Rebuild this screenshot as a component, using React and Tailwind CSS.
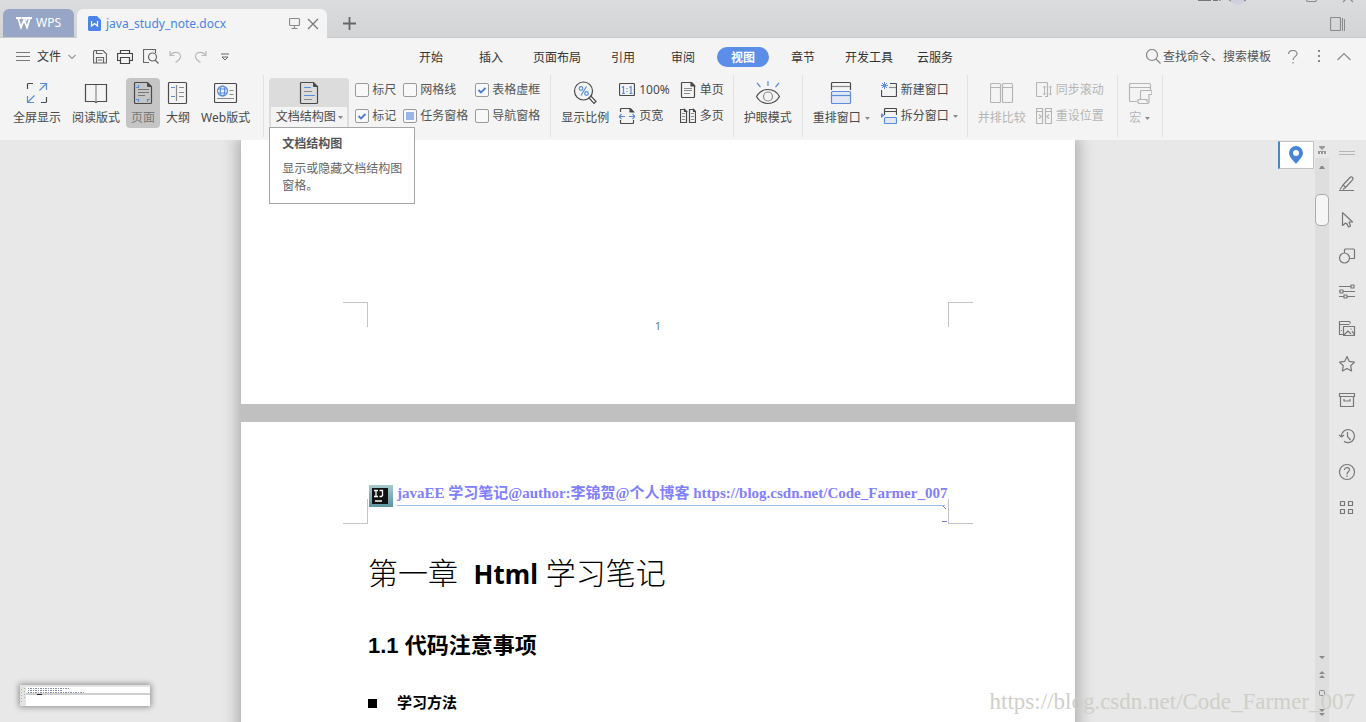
import clsx from "clsx";

const menus = ["开始", "插入", "页面布局", "引用", "审阅", "视图", "章节", "开发工具", "云服务"];

const Svg = ({ w = 24, h = 24, className, children }) => (
  <svg
    width={w}
    height={h}
    viewBox={`0 0 ${w} ${h}`}
    fill="none"
    stroke="currentColor"
    strokeWidth="1.2"
    aria-hidden="true"
    className={clsx("shrink-0", className)}
  >
    {children}
  </svg>
);

const BLUE = "#5b8ddb";

const Caret = () => (
  <svg width="5" height="3" viewBox="0 0 5 3" className="shrink-0" aria-hidden="true">
    <path d="M0 0h5L2.5 3z" fill="#8a8a8a" />
  </svg>
);

// ribbon icons, 24x24
const FullScreenIcon = () => (
  <Svg>
    <path d="M2.5 8V3.5a1 1 0 0 1 1-1H8M21.500 16v4.500a1 1 0 0 1-1 1H16" />
    <path d="M15 2.500h6.500V9M21.500 2.500l-7 7M9 21.500H2.500V15M2.500 21.500l7-7" stroke={BLUE} />
  </Svg>
);

const ReadIcon = () => (
  <Svg>
    <path d="M1.500 3.500h21v17h-9l-1.500 1-1.500-1h-9z" />
    <path d="M12 4v17" stroke="#8a8a8a" />
  </Svg>
);

const PageIcon = () => (
  <Svg>
    <path d="M4.500 1.500h12l4 4v16a1 1 0 0 1-1 1h-15a1 1 0 0 1-1-1v-19a1 1 0 0 1 1-1z" />
    <path d="M16 1l5 5h-4a1 1 0 0 1-1-1z" fill="currentColor" stroke="none" />
    <path d="M7 8.500h11M7 11.500h11M7 14.500h7" stroke="#777" />
    <path d="M5 6.500h2.500V4M5 18.500h2.500V21M19 18.500h-2.500V21" stroke={BLUE} />
  </Svg>
);

const OutlineIcon = () => (
  <Svg>
    <rect x="2.500" y="1.500" width="18" height="21" rx="1" />
    <path d="M10.500 4v16M13 6.500h5M13 11.500h5M13 15.500h5" stroke="#8a8a8a" />
    <path d="M5 6.500h4M5 15.500h4" stroke={BLUE} />
  </Svg>
);

const WebIcon = () => (
  <Svg>
    <rect x=".500" y="2.500" width="22" height="19" rx="1" />
    <path d="M15.500 9.500h4M15.500 13.500h4M3 17.500h17" stroke="#8a8a8a" />
    <g stroke={BLUE}>
      <circle cx="8.500" cy="10" r="5" />
      <ellipse cx="8.500" cy="10" rx="2.200" ry="5" />
      <path d="M4 8h9M4 12h9" />
    </g>
  </Svg>
);

const DocMapIcon = () => (
  <Svg>
    <path d="M4.500 1.500h12l4 4v16a1 1 0 0 1-1 1h-15a1 1 0 0 1-1-1v-19a1 1 0 0 1 1-1z" />
    <path d="M16 1l5 5h-4a1 1 0 0 1-1-1z" fill="currentColor" stroke="none" />
    <path d="M7 6.500h7M7 14.500h11" stroke={BLUE} />
    <path d="M7 10.500h8M7 18.500h8" stroke="#8a8a8a" />
  </Svg>
);

const ZoomIcon = () => (
  <Svg>
    <circle cx="10.500" cy="10" r="9" />
    <path d="M16 17l2-2 5 5.500-2 2z" fill="#fff" />
    <circle cx="8" cy="7.500" r="1.800" stroke={BLUE} />
    <circle cx="13.500" cy="12.500" r="1.800" stroke={BLUE} />
    <path d="M13.500 5.500l-5.500 9" stroke={BLUE} />
  </Svg>
);

const EyeIcon = () => (
  <Svg h={26}>
    <path d="M.500 16.500C3 12 7 9.500 12 9.500s9 2.500 11.500 7c-2.500 4.500-6.500 7-11.500 7S3 21 .500 16.500z" />
    <circle cx="12" cy="16.500" r="4.500" stroke="#8a8a8a" />
    <path d="M12 1v5M1 3l3.500 4M23 3l-3.500 4" stroke={BLUE} />
  </Svg>
);

const ArrangeIcon = () => (
  <Svg>
    <path d="M2.500 9V2.500a1 1 0 0 1 1-1h17a1 1 0 0 1 1 1V9" />
    <path d="M3 5.500h18" stroke="#8a8a8a" />
    <rect x="2.500" y="10.500" width="19" height="12" rx="1" stroke={BLUE} fill="#e3e9f4" />
    <path d="M3 14.500h18" stroke={BLUE} />
  </Svg>
);

const CompareIcon = () => (
  <Svg>
    <rect x=".500" y="2.500" width="10" height="19" rx="1" />
    <rect x="12.500" y="2.500" width="10" height="19" rx="1" />
    <path d="M1 6.500h9M13 6.500h9" />
  </Svg>
);

const MacroIcon = () => (
  <Svg>
    <path d="M9 20.500H2.500a1 1 0 0 1-1-1v-16a1 1 0 0 1 1-1h19a1 1 0 0 1 1 1V10M2 6.500h20" />
    <path d="M12.500 18v-7.500a1 1 0 0 1 1-1H23a1 1 0 0 1 1 1v3h-3v7a2 2 0 0 1-2 2h-8a1.500 1.500 0 0 1-1-1.500V18.500h9V21" />
  </Svg>
);

// ribbon icons, 16x16
const OneToOneIcon = () => (
  <Svg w={16} h={16}>
    <rect x=".500" y="1.500" width="15" height="12" rx="1" />
    <path d="M3 5.500l1.500-1v7M10.500 5.500l1.500-1v7M3 11.500h3M10.500 11.500h3M8 6v1M8 9v1" stroke={BLUE} />
  </Svg>
);

const PageWidthIcon = () => (
  <Svg w={16} h={16}>
    <path d="M1.500 4V1.500a1 1 0 0 1 1-1H11l3.500 3.500M1.500 12v2.500a1 1 0 0 0 1 1h11a1 1 0 0 0 1-1V12" />
    <path d="M11 .500l3.500 3.500H11z" fill="currentColor" />
    <path d="M0 8.500h6M2.500 6L0 8.500 2.500 11M16 8.500h-6M13.500 6L16 8.500 13.500 11" stroke={BLUE} />
  </Svg>
);

const SinglePageIcon = () => (
  <Svg w={16} h={16}>
    <path d="M2.500.500h9l3 3v11a1 1 0 0 1-1 1h-11a1 1 0 0 1-1-1v-13a1 1 0 0 1 1-1z" />
    <path d="M11 .500v3.500h3.500z" fill="currentColor" />
    <path d="M4 6.500h8M4 8.500h8M4 11.500h6" stroke="#8a8a8a" />
  </Svg>
);

const MultiPageIcon = () => (
  <Svg w={16} h={16}>
    <path d="M.500 1.500h4l2 2v11h-6zM9.500 1.500h4l2 2v11h-6z" />
    <path d="M4.500 1.500v2h2zM13.500 1.500v2h2z" fill="currentColor" />
    <path d="M2 5.500h3M2 8.500h3M2 11.500h3M11 5.500h3M11 8.500h3M11 11.500h3" stroke="#8a8a8a" />
  </Svg>
);

const NewWindowIcon = () => (
  <Svg w={16} h={16}>
    <path d="M.500 8v5.500a1 1 0 0 0 1 1h13a1 1 0 0 0 1-1v-11a1 1 0 0 0-1-1H9" />
    <path d="M8 5.500h7" stroke="#8a8a8a" />
    <path d="M3.500 0v7M0 3.500h7M1 1l5 5M6 1L1 6" stroke={BLUE} strokeWidth="1" />
  </Svg>
);

const SplitIcon = () => (
  <Svg w={16} h={16}>
    <path d="M3.500 7V1.500a1 1 0 0 1 1-1h10a1 1 0 0 1 1 1V7M4 3.500h11" />
    <rect x="3.500" y="9.500" width="12" height="6" rx="1" stroke={BLUE} fill="#e3e9f4" />
    <path d="M0 5l3.500 2.500L0 10z" fill={BLUE} stroke="none" />
  </Svg>
);

const SyncScrollIcon = () => (
  <Svg w={16} h={16}>
    <path d="M6 14.500H1.500a1 1 0 0 1-1-1v-12a1 1 0 0 1 1-1h9a1 1 0 0 1 1 1V14.500H9" />
    <path d="M8.500 4v9M14.500 4v9M7 5.500L8.500 4 10 5.500M7 11.500L8.500 13l1.500-1.500M13 5.500L14.500 4 16 5.500M13 11.500l1.500 1.500 1.500-1.500" strokeWidth="1" />
  </Svg>
);

const ResetPosIcon = () => (
  <Svg w={16} h={16}>
    <path d="M.500.500h6v15h-6zM9.500.500h6v15h-6zM1 3.500h5M10 3.500h5M3 6.500l2 2-2 2M13 6.500l-2 2 2 2" />
  </Svg>
);

function Group({ className, children }) {
  return (
    <div className={clsx("flex h-[62px] shrink-0 border-r border-[#e2e2e2] pt-[3px]", className)}>
      {children}
    </div>
  );
}

function BigButton({ icon, label, active, disabled, caret }) {
  return (
    <button
      disabled={disabled}
      className={clsx(
        "flex h-[50px] shrink-0 flex-col items-center rounded px-[5px] pt-[3px]",
        active && "bg-[#c5c5c5]",
        disabled ? "text-[#b5b5b5]" : "text-[#4a4a4a]"
      )}
    >
      <span className="flex h-6 items-center">{icon}</span>
      <span className={clsx("mt-[5px] flex items-center gap-1 leading-4", active && "text-[#777]")}>
        {label}
        {caret && <Caret />}
      </span>
    </button>
  );
}

function SmallButton({ icon, label, disabled, caret }) {
  return (
    <button
      disabled={disabled}
      className={clsx(
        "flex h-4 items-center gap-1 leading-4",
        disabled ? "text-[#b5b5b5]" : "text-[#4a4a4a]"
      )}
    >
      {icon}
      {label}
      {caret && <Caret />}
    </button>
  );
}

function Check({ label, state }) {
  return (
    <label className="relative flex h-4 items-center gap-[3px] leading-4">
      <input
        type="checkbox"
        defaultChecked={state === "on"}
        className="size-[14px] shrink-0 appearance-none rounded-xs border border-[#9a9a9a] bg-[#f8f8f8]"
      />
      {state === "on" && (
        <Svg w={14} h={14} className="pointer-events-none absolute left-0 text-[#4a7dd2]">
          <path d="M3.500 7l2.500 2.500L10.500 5" strokeWidth="1.800" />
        </Svg>
      )}
      {state === "mixed" && (
        <span className="pointer-events-none absolute left-[3px] size-2 bg-[#9ab5e8]" />
      )}
      {label}
    </label>
  );
}

function TitleBar() {
  return (
    <header className="relative flex h-[38px] shrink-0 items-end border-b border-[#cacaca] bg-linear-to-b from-[#dbdcde] to-[#d3d4d6] pl-[3px]">
      <button className="flex h-7 w-[71px] items-center justify-center gap-1 rounded-t-md bg-[#97a6c7] text-[12px] text-white">
        <Svg w={16} h={14}>
          <path d="M0 2h5.500M2 2l3 9.500L8 4l3 7.500L14 2M6 2h5l-1 3M11.500 2H16" strokeWidth="1.800" />
        </Svg>
        WPS
      </button>
      <div className="relative top-px ml-[3px] flex h-[29px] w-[250px] items-center rounded-t-md bg-[#f4f4f4] pr-2 pl-[11px]">
        <svg width="13" height="15" viewBox="0 0 13 15" aria-hidden="true">
          <path d="M1.500 0H9l4 4v9.500a1.500 1.500 0 0 1-1.500 1.500h-10A1.500 1.500 0 0 1 0 13.500v-12A1.500 1.500 0 0 1 1.500 0z" fill="#4b83e6" />
          <path d="M3.500 5v5L6.500 7.500l3 2.500V5" fill="none" stroke="#fff" strokeWidth="1.300" />
        </svg>
        <span className="ml-[5px] text-[12px] text-[#4b83e6]">java_study_note.docx</span>
        <Svg w={12} h={13} className="ml-auto text-[#8a8a8a]">
          <rect x=".500" y="1.500" width="10" height="7" rx="1" />
          <path d="M5.500 9v2.500M2.500 11.500h6" />
        </Svg>
        <button aria-label="关闭" className="ml-1.5 text-[#777]">
          <Svg w={12} h={12}>
            <path d="M1 1l10 10M11 1L1 11" />
          </Svg>
        </button>
      </div>
      <button aria-label="新建" className="mb-[7px] ml-4 text-[#666]">
        <Svg w={13} h={13}>
          <path d="M6.500 0v13M0 6.500h13" strokeWidth="1.800" />
        </Svg>
      </button>
      <button aria-label="侧栏" className="mr-5 mb-1.5 ml-auto text-[#8a8a8a]">
        <Svg w={16} h={14}>
          <rect x=".500" y=".500" width="10" height="13" rx="1" />
          <path d="M12.500 1v13M14.500 2v12" strokeWidth="1" />
        </Svg>
      </button>
      <div className="absolute top-0 right-2">
        <Svg w={160} h={6}>
          <path d="M0 .500h13M15 .500h5M22 0v1" stroke="#777" />
          <circle cx="40" cy="-4" r="9" fill="#d0d1de" stroke="none" />
          <path d="M31 0l2 1M48 0l-2 1" stroke="#8d8da5" />
          <path d="M108.500 0a1.500 1.500 0 0 0 1.500 1.500h7a1.500 1.500 0 0 0 1.500-1.500M145 2l4-4M155 2l-4-4" stroke="#8a8a8a" />
        </Svg>
      </div>
    </header>
  );
}

function MenuBar() {
  return (
    <nav className="flex h-[37px] shrink-0 items-center text-[#333]">
      <div className="flex w-[405px] shrink-0 items-center pl-4 text-[#666]">
        <button className="flex items-center gap-[7px]">
          <Svg w={14} h={11} className="text-[#777]">
            <path d="M0 1.500h14M0 5.500h14M0 9.500h14" strokeWidth="1" />
          </Svg>
          <span className="text-[#333]">文件</span>
          <Svg w={8} h={6} className="text-[#999]">
            <path d="M.500 1L4 4.500 7.500 1" />
          </Svg>
        </button>
        <button aria-label="保存" className="ml-[17px]">
          <Svg w={14} h={14}>
            <path d="M1.500.500H10L13.500 4v9h-13V1.500z" />
            <path d="M3.500.500v3h6M3.500 13V7.500h7V13M5 10h4" />
          </Svg>
        </button>
        <button aria-label="打印" className="ml-2.5 text-[#444]">
          <Svg w={16} h={16}>
            <path d="M3.500 4V1.500h9V4M3.500 11.500h-3v-7h15v7h-3M3.500 8.500h9v6h-9z" />
          </Svg>
        </button>
        <button aria-label="打印预览" className="ml-2.5">
          <Svg w={16} h={16}>
            <path d="M6 13.500H.500v-13h12V4" />
            <circle cx="9.500" cy="8" r="4" />
            <path d="M12 11l3.500 3.500" />
          </Svg>
        </button>
        <button aria-label="撤销" className="ml-2.5 text-[#bbb]">
          <Svg w={13} h={13}>
            <path d="M1 1v4.500h4.500M1 5.500C4 1 11 1.500 11.500 6c.300 3-2 4.500-5 6.500" />
          </Svg>
        </button>
        <button aria-label="恢复" className="ml-3 text-[#bbb]">
          <Svg w={13} h={13}>
            <path d="M12 1v4.500H7.500M12 5.500C9 1 2 1.500 1.500 6c-.300 3 2 4.500 5 6.500" />
          </Svg>
        </button>
        <button aria-label="更多" className="ml-3.5">
          <Svg w={8} h={8}>
            <path d="M0 1h8M1 4l3 3 3-3z" strokeWidth="1" />
          </Svg>
        </button>
      </div>
      <div className="flex shrink-0 items-center gap-2">
        {menus.map((name) => (
          <button
            key={name}
            className={clsx(
              "h-5 min-w-[52px] rounded-full px-2 leading-[22px]",
              name === "视图" && "bg-[#5b8ee8] font-bold text-white"
            )}
          >
            {name}
          </button>
        ))}
      </div>
      <div className="ml-auto flex items-center pr-[15px] text-[#888]">
        <label htmlFor="search" className="mr-0.5">
          <Svg w={15} h={15}>
            <circle cx="6" cy="6" r="5.500" />
            <path d="M10 10l4.500 4.500" />
          </Svg>
        </label>
        <input
          id="search"
          aria-label="搜索"
          placeholder="查找命令、搜索模板"
          className="w-[124px] bg-transparent outline-none placeholder:text-[#555]"
        />
        <button aria-label="帮助">
          <Svg w={12} h={14}>
            <path d="M1.500 4c0-5 9-4.500 8.500 0-.300 2.500-4 3-4 6M6 12v1.500" />
          </Svg>
        </button>
        <button aria-label="选项" className="ml-[19px]">
          <svg width="3" height="13" viewBox="0 0 3 13" fill="currentColor" aria-hidden="true">
            <path d="M0 0h2v2H0zM0 5h2v2H0zM0 10h2v2H0z" />
          </svg>
        </button>
        <button aria-label="收起功能区" className="ml-4">
          <Svg w={14} h={9}>
            <path d="M.500 8L7 1.500 13.500 8" />
          </Svg>
        </button>
      </div>
    </nav>
  );
}

function Ribbon() {
  return (
    <div className="flex h-[65px] shrink-0 text-[#555]">
      <Group className="gap-px pr-2 pl-2">
        <BigButton icon={<FullScreenIcon />} label="全屏显示" />
        <BigButton icon={<ReadIcon />} label="阅读版式" />
        <BigButton icon={<PageIcon />} label="页面" active />
        <BigButton icon={<OutlineIcon />} label="大纲" />
        <BigButton icon={<WebIcon />} label="Web版式" />
      </Group>
      <Group className="pr-2.5 pl-[5px]">
        <div className="relative">
          <button className="flex h-[50px] w-20 flex-col items-center rounded bg-[#dcdcdc] text-[#4a4a4a]">
            <span className="flex h-[29px] items-center pt-px">
              <DocMapIcon />
            </span>
            <span className="flex h-5 w-[76px] items-center justify-center gap-0.5 bg-[#f4f4f4]">
              文档结构图
              <Caret />
            </span>
          </button>
          <div
            role="tooltip"
            className="absolute top-[49px] left-0 z-20 h-[77px] w-[146px] border border-[#a5a5a5] bg-white px-3 pt-[7px] leading-[17px] text-[#666]"
          >
            <p className="font-bold text-[#555]">文档结构图</p>
            <p className="mt-2">显示或隐藏文档结构图窗格。</p>
          </div>
        </div>
        <div className="ml-1.5 flex gap-[7px] pt-1">
          <div className="flex flex-col gap-2.5">
            <Check label="标尺" />
            <Check label="标记" state="on" />
          </div>
          <div className="flex flex-col gap-2.5">
            <Check label="网格线" />
            <Check label="任务窗格" state="mixed" />
          </div>
          <div className="flex flex-col gap-2.5">
            <Check label="表格虚框" state="on" />
            <Check label="导航窗格" />
          </div>
        </div>
      </Group>
      <Group className="pr-[9px] pl-[5px]">
        <BigButton icon={<ZoomIcon />} label="显示比例" />
        <div className="ml-[5px] flex gap-2.5 pt-1">
          <div className="flex flex-col gap-2.5">
            <SmallButton icon={<OneToOneIcon />} label="100%" />
            <SmallButton icon={<PageWidthIcon />} label="页宽" />
          </div>
          <div className="flex flex-col gap-2.5">
            <SmallButton icon={<SinglePageIcon />} label="单页" />
            <SmallButton icon={<MultiPageIcon />} label="多页" />
          </div>
        </div>
      </Group>
      <Group className="px-[5px]">
        <BigButton icon={<EyeIcon />} label="护眼模式" />
      </Group>
      <Group className="pr-[9px] pl-[5px]">
        <BigButton icon={<ArrangeIcon />} label="重排窗口" caret />
        <div className="ml-[6px] flex flex-col gap-2.5 pt-1">
          <SmallButton icon={<NewWindowIcon />} label="新建窗口" />
          <SmallButton icon={<SplitIcon />} label="拆分窗口" caret />
        </div>
      </Group>
      <Group className="pr-[13px] pl-[5px]">
        <BigButton icon={<CompareIcon />} label="并排比较" disabled />
        <div className="ml-[5px] flex flex-col gap-2.5 pt-1">
          <SmallButton icon={<SyncScrollIcon />} label="同步滚动" disabled />
          <SmallButton icon={<ResetPosIcon />} label="重设位置" disabled />
        </div>
      </Group>
      <Group className="px-[5px]">
        <BigButton icon={<MacroIcon />} label="宏" caret disabled />
      </Group>
    </div>
  );
}

function Pages() {
  return (
    <main className="relative min-w-0 flex-1 overflow-hidden pl-px">
      <div className="mx-auto w-[834px] bg-[#c0c0c0] shadow-[0_0_14px_4px_rgba(0,0,0,0.25)]">
        <section className="h-[264px] bg-white px-[102px] pt-[162px]">
          <div className="flex items-start justify-between">
            <div className="size-[25px] border-t border-r border-[#c4c4c4]" />
            <span className="mt-4 text-[11px] leading-4 text-[#5a8a5a]">1</span>
            <div className="size-[25px] border-t border-l border-[#c4c4c4]" />
          </div>
        </section>
        <section className="mt-[18px] h-[600px] bg-white px-[102px] pt-[63px]">
          <div className="flex h-[39px]">
            <div className="size-[25px] shrink-0 self-end border-r border-b border-[#c4c4c4]" />
            <div className="relative flex min-w-0 flex-1 pr-[3px] pl-px">
              <svg width="24" height="22" viewBox="0 0 24 22" className="shrink-0" aria-hidden="true">
                <defs>
                  <linearGradient id="ij" x1="0" y1="0" x2="0" y2="1">
                    <stop offset="0" stopColor="#a9c9cf" />
                    <stop offset="1" stopColor="#5c939f" />
                  </linearGradient>
                </defs>
                <path d="M0 0h24v22H0z" fill="url(#ij)" />
                <path d="M3 3h16v16H3z" fill="#111" />
                <path d="M5 5.500h4M7 5.500v6M5 11.500h4M10.500 5.500h3v5l-1 1h-2M6 16h7" stroke="#fff" strokeWidth="1.300" fill="none" />
              </svg>
              <a
                href="https://blog.csdn.net/Code_Farmer_007"
                className="ml-1 h-[21px] min-w-0 flex-1 border-b border-[#9bbbe0] font-['Liberation_Serif','Noto_Sans_CJK_SC',serif] text-[15px] leading-4 font-bold whitespace-nowrap text-[#8080ff]"
              >
                javaEE 学习笔记@author:李锦贺@个人博客 https://blog.csdn.net/Code_Farmer_007
              </a>
              <Svg w={6} h={18} className="absolute right-0 bottom-0 text-[#7c7ce0]">
                <path d="M1 0l3 3M0 15.500h5" strokeWidth="1" />
              </Svg>
            </div>
            <div className="size-[25px] shrink-0 self-end border-b border-l border-[#c4c4c4]" />
          </div>
          <div className="pl-[25px] text-black">
            <h1 className="mt-[31px] font-['Noto_Sans','Noto_Sans_CJK_SC',sans-serif] text-[30px] leading-9 font-light whitespace-pre">
              第一章&nbsp; <span className="text-[26px] font-bold">Html</span> 学习笔记
            </h1>
            <h2 className="mt-10 font-['Liberation_Sans','Noto_Sans_CJK_SC',sans-serif] text-[22px] leading-7 font-bold">
              1.1 代码注意事项
            </h2>
            <ul className="mt-[33px] font-['Liberation_Sans','Noto_Sans_CJK_SC',sans-serif] text-[15px] leading-5 font-bold">
              <li className="flex items-center gap-5">
                <span className="size-[9px] bg-black" />
                学习方法
              </li>
            </ul>
          </div>
        </section>
      </div>
      <button
        aria-label="定位"
        className="absolute top-px right-px flex h-7 w-9 items-center justify-center border border-l-2 border-[#c4c4c4] border-l-[#4585d8] bg-white pr-0.5"
      >
        <svg width="14" height="18" viewBox="0 0 14 18" aria-hidden="true">
          <path
            d="M7 0a7 7 0 0 1 7 7c0 4-4 7-7 11C4 14 0 11 0 7a7 7 0 0 1 7-7zm0 4a3 3 0 1 0 0 6 3 3 0 0 0 0-6z"
            fill="#4585d8"
          />
        </svg>
      </button>
      <div className="absolute bottom-4 left-5 h-[21px] w-[130px] bg-white shadow-[0_0_6px_1px_rgba(0,0,0,0.4)]">
        <svg width="130" height="21" viewBox="0 0 130 21" aria-hidden="true">
          <path d="M0 0h130v2H0zM0 2h6v19H0z" fill="#e4e4e4" />
          <path d="M6 8h124v2H6z" fill="#cfcfcf" />
          <path d="M8 3.500h42M8 5.500h34M8 7.500h56" stroke="#8a90a8" strokeDasharray="1 1 2 1" />
          <path d="M17 9.500h5" stroke="#222" />
          <path d="M1.500 4v15M4.500 3v12" stroke="#aaa" strokeDasharray="1 2" />
        </svg>
      </div>
    </main>
  );
}

function Scrollbar() {
  return (
    <div className="flex w-[14px] shrink-0 flex-col items-center bg-[#dedede] text-[#8a8a8a]">
      <div className="flex h-[18px] w-full items-start justify-center bg-[#e8e8e8] pt-1.5">
        <svg width="8" height="9" viewBox="0 0 8 9" fill="#999" aria-hidden="true">
          <path d="M1 0h6v1L4 4 1 1zM0 6h2v2H0zM3 6h2v2H3zM6 6h2v2H6zM0 5h8v1H0z" />
        </svg>
      </div>
      <svg width="6" height="3" viewBox="0 0 6 3" className="mt-2" fill="currentColor" aria-hidden="true">
        <path d="M0 3h6L4 0H2z" />
      </svg>
      <div className="mt-[25px] h-8 w-[14px] rounded-[5px] border border-[#aaa] bg-[#f5f5f5]" />
      <svg width="8" height="60" viewBox="0 0 8 60" className="mt-auto mb-1.5" fill="currentColor" aria-hidden="true">
        <path d="M1 0h6L4 3zM1 18l3-3 3 3zM1 22l3-3 3 3zM1 53h6l-3 3zM1 57h6l-3 3z" />
        <rect x="1.500" y="34.500" width="5" height="5" rx="1" fill="none" stroke="currentColor" />
      </svg>
    </div>
  );
}

const tools = [
  { name: "样式", d: "M1 15.500h15M2 14.500L5 10l7-7.500a1.500 1.500 0 0 1 2.500 0c.800.800.800 1.500 0 2.300L8 12l-3 2.500M5 10l3 2.500" },
  { name: "选择", d: "M4.500 1.500v13l3-2.500M4.500 1.500l10 9.500h-3.500l1.500 4-2 1-2-4M7.500 12l1 1" },
  { name: "形状", d: "M6.500 5.500V3a1 1 0 0 1 1-1h8a1 1 0 0 1 1 1v8.500h-5M11.500 11a5 5 0 1 1-10 0 5 5 0 0 1 10 0z" },
  { name: "属性", d: "M1 3.500h12M1 8.500h1M5 8.500h12M1 13.500h5M9 13.500h8M13 2h3v3h-3zM2 7h3v3H2zM6 12h3v3H6z" },
  { name: "图片", d: "M5 15.500H1.500v-13h10l1 2M1.500 5.500h10M5.500 7.500h11v9h-11zM6 16l4-4 3 3M14 12l2.500 4M13 9.500v1M3 11.500h1" },
  { name: "收藏", d: "M9 1.500l2.300 4.900 5.200.700-3.800 3.700.900 5.200L9 13.500 4.400 16l.900-5.200L1.500 7.100l5.200-.700z" },
  { name: "归档", d: "M1.500 2.500h15v3h-15zM2.500 5.500h13v10h-13zM6 8v2h6V8" },
  { name: "历史", d: "M3.500 9a6.500 6.500 0 1 1 2.500 5.200M1 8l2.500 2L6 8M9.500 5v4.500L12.500 13" },
  { name: "帮助", d: "M16.500 9a7.500 7.500 0 1 1-15 0 7.500 7.500 0 0 1 15 0zM6.500 7c0-3.500 5.500-3 5 0-.300 1.500-2.500 2-2.500 4.500M9 12.500v1.500" },
  { name: "应用", d: "M2.500 2.500h4v4h-4zM10.500 2.500h4v4h-4zM2.500 10.500h4v4h-4zM10.500 10.500h4v4h-4z" },
];

function SidePanel() {
  return (
    <aside className="flex w-[37px] shrink-0 flex-col items-center gap-[18px] pt-[11px] pr-0.5 text-[#777]">
      <div className="mb-0.5 h-1 w-4 border-y border-[#b5b5b5]" />
      {tools.map((tool) => (
        <button key={tool.name} aria-label={tool.name} className="size-[18px]">
          <Svg w={18} h={18}>
            <path d={tool.d} strokeLinejoin="round" />
          </Svg>
        </button>
      ))}
    </aside>
  );
}

export default function App() {
  return (
    <div className="relative flex h-screen flex-col overflow-hidden bg-[#f4f4f4] font-['Noto_Sans','Noto_Sans_CJK_SC',sans-serif] text-[12px]">
      <TitleBar />
      <MenuBar />
      <Ribbon />
      <div className="flex min-h-0 flex-1 bg-[#e8e8e8]">
        <Pages />
        <Scrollbar />
        <SidePanel />
      </div>
      <p className="pointer-events-none absolute right-[11px] bottom-2 font-['Liberation_Serif',serif] text-[23px] leading-6 text-[#cfcfc9]">
        https://blog.csdn.net/Code_Farmer_007
      </p>
    </div>
  );
}
